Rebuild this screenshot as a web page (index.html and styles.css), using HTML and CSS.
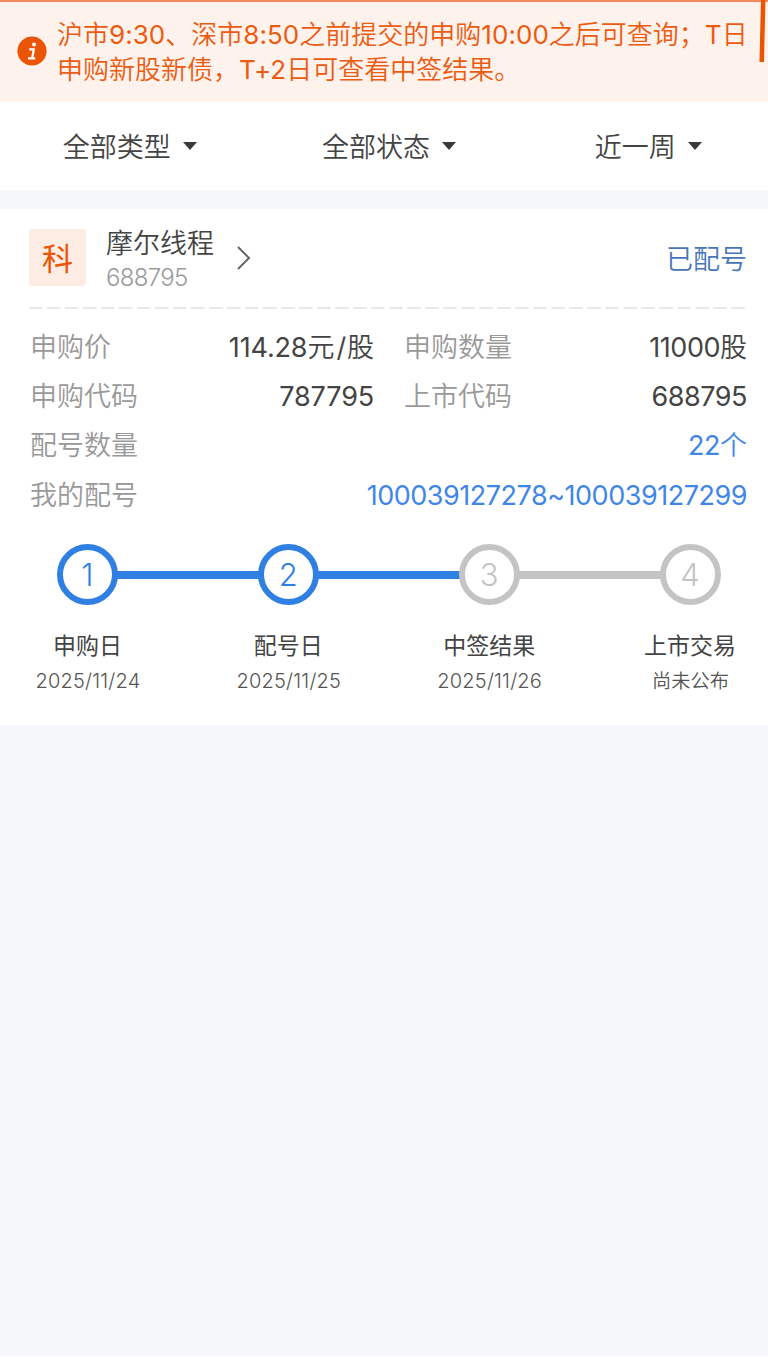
FILE: index.html
```html
<!DOCTYPE html>
<html lang="zh-CN">
<head>
    <meta charset="UTF-8">
    <meta name="viewport" content="width=device-width, initial-scale=1.0">
    <title>新股申购查询</title>
    <link rel="stylesheet" href="styles.css">
</head>
<body>
    <div class="notice">
        <svg class="notice-icon" viewBox="0 0 30 30">
            <circle cx="15" cy="15" r="14.6" fill="#ea5404"/>
            <circle cx="17" cy="8.6" r="2" fill="#fff"/>
            <path d="M12.2 13.4h4.6l-1.6 9M11 22.4h7.2" fill="none" stroke="#fff" stroke-width="2.3"/>
        </svg>
        <div class="notice-text">
            <div class="notice-line">沪市<span class="num">9:30</span>、深市<span class="num">8:50</span>之前提交的申购<span class="num">10:00</span>之后可查询；<span class="num">T</span>日</div>
            <div class="notice-line">申购新股新债，<span class="num">T+2</span>日可查看中签结果。</div>
        </div>
        <svg class="notice-mark" viewBox="0 0 8 64">
            <path d="M5.2 0L3.7 62" stroke="#ea5404" stroke-width="4.5"/>
        </svg>
    </div>

    <div class="filters">
        <div class="filter">全部类型<i class="caret"></i></div>
        <div class="filter">全部状态<i class="caret"></i></div>
        <div class="filter">近一周<i class="caret"></i></div>
    </div>

    <div class="card">
        <div class="stock">
            <div class="tag">科</div>
            <div class="stock-info">
                <div class="stock-name">摩尔线程</div>
                <div class="stock-code">688795</div>
            </div>
            <svg class="arrow" viewBox="0 0 14 24">
                <path d="M1 1l11 11L1 23" fill="none" stroke="#666" stroke-width="2"/>
            </svg>
            <div class="state">已配号</div>
        </div>

        <svg class="divider" viewBox="0 0 716 2">
            <path d="M0 1h716" stroke="#e9e9e9" stroke-width="2" stroke-dasharray="13.5 4.51"/>
        </svg>

        <div class="info">
            <div class="row">
                <span class="label">申购价</span>
                <span class="value mid"><span class="num">114.28</span>元<span class="num slash">/</span>股</span>
                <span class="label">申购数量</span>
                <span class="value"><span class="num">11000</span>股</span>
            </div>
            <div class="row">
                <span class="label">申购代码</span>
                <span class="value mid"><span class="num">787795</span></span>
                <span class="label">上市代码</span>
                <span class="value"><span class="num">688795</span></span>
            </div>
            <div class="row">
                <span class="label">配号数量</span>
                <span class="value blue"><span class="num">22</span>个</span>
            </div>
            <div class="row">
                <span class="label">我的配号</span>
                <span class="value blue"><span class="num">100039127278~100039127299</span></span>
            </div>
        </div>

        <div class="steps">
            <div class="step done">
                <div class="circle">1</div>
                <div class="step-name">申购日</div>
                <div class="step-date">2025/11/24</div>
            </div>
            <div class="step done">
                <div class="circle">2</div>
                <div class="step-name">配号日</div>
                <div class="step-date">2025/11/25</div>
            </div>
            <div class="step">
                <div class="circle">3</div>
                <div class="step-name">中签结果</div>
                <div class="step-date">2025/11/26</div>
            </div>
            <div class="step">
                <div class="circle">4</div>
                <div class="step-name">上市交易</div>
                <div class="step-date cjk">尚未公布</div>
            </div>
        </div>
    </div>
</body>
</html>
```
FILE: styles.css
```css
* {
    box-sizing: border-box;
}
html {
    background: #fff;
}
body {
    margin: 0;
    height: 1356px;
    background: #f6f7fa;
    color: #444;
    font-family: "Noto Sans CJK SC", sans-serif;
    font-size: 27px;
    font-weight: 350;
    overflow-x: hidden;
}
.num {
    font-family: Inter, sans-serif;
    font-weight: 400;
    line-height: 0;
}
.notice {
    position: relative;
    display: flex;
    height: 102px;
    padding: 13px 0 0 17px;
    background: #fef2ed;
    border-top: 2px solid #f08a5c;
    color: #ec5b10;
}
.notice-icon {
    width: 30px;
    height: 30px;
    margin-top: 21px;
}
.notice-text {
    margin-left: 10px;
    font-size: 26px;
    line-height: 35px;
    white-space: nowrap;
}
.notice-line .num {
    letter-spacing: 0.05px;
}
.notice-mark {
    position: absolute;
    top: -2px;
    right: 2px;
    width: 8px;
    height: 64px;
}
.filters {
    display: flex;
    height: 88px;
    margin-right: -10px;
    padding-bottom: 2px;
    background: #fff;
}
.filter {
    flex: 1;
    display: flex;
    align-items: center;
    justify-content: center;
}
.caret {
    margin: 2px 0 0 12px;
    border: 7px solid transparent;
    border-top: 8px solid #3a3a3a;
    border-bottom: 0;
}
.card {
    height: 516px;
    margin-top: 19px;
    padding: 14px 21px 0 29px;
    background: #fff;
}
.stock {
    display: flex;
    align-items: center;
    height: 68px;
}
.tag {
    width: 57px;
    height: 57px;
    border-radius: 4px;
    background: #fdece4;
    color: #ea5404;
    font-size: 31px;
    font-weight: 400;
    line-height: 55px;
    text-align: center;
}
.stock-info {
    width: 110px;
    margin-left: 20px;
    padding-top: 3px;
}
.stock-name {
    line-height: 38px;
    white-space: nowrap;
}
.stock-code {
    font-family: Inter, sans-serif;
    font-size: 24px;
    letter-spacing: -0.7px;
    line-height: 34px;
    color: #999;
}
.arrow {
    width: 14px;
    height: 24px;
    margin: 2px 0 0 21px;
}
.state {
    margin-left: auto;
    color: #4876b8;
}
.divider {
    display: block;
    width: 716px;
    height: 2px;
    margin-top: 16px;
}
.info {
    padding-top: 12px;
}
.row {
    display: flex;
    height: 49.2px;
    padding-left: 1px;
    line-height: 49px;
}
.label {
    width: 108px;
    color: #999;
    white-space: nowrap;
}
.value {
    flex: 1;
    text-align: right;
}
.value .num {
    letter-spacing: -0.48px;
}
.value .slash {
    padding: 0 1px 0 2px;
}
.value.mid {
    flex: none;
    width: 236px;
    margin-right: 30px;
}
.value.mid .num {
    letter-spacing: -0.15px;
}
.blue {
    color: #3f86e8;
}
.steps {
    display: flex;
    margin: 26px -43.5px 0 -42px;
}
.step {
    position: relative;
    flex: 1;
    display: flex;
    flex-direction: column;
    align-items: center;
}
.circle {
    width: 61px;
    height: 61px;
    border: 6px solid #c4c4c4;
    border-radius: 50%;
    color: #c4c4c4;
    font-family: Inter, sans-serif;
    font-size: 31px;
    font-weight: 300;
    line-height: 49px;
    text-align: center;
}
.done .circle {
    border-color: #3080e4;
    color: #3080e4;
}
/* connector to the next step */
.step:not(:last-child)::after {
    content: "";
    position: absolute;
    top: 27px;
    left: calc(50% + 29px);
    width: calc(100% - 58px);
    height: 8px;
    background: #c4c4c4;
}
.step.done::after {
    background: #3080e4;
}
.step-name {
    margin-top: 22px;
    font-size: 23px;
    font-weight: 400;
    line-height: 34px;
}
.step-date {
    margin-left: 1px;
    padding-top: 2px;
    font-family: Inter, sans-serif;
    font-size: 20px;
    letter-spacing: 0.2px;
    line-height: 37px;
    color: #555;
}
.step-date.cjk {
    padding-top: 1px;
    font-family: "Noto Sans CJK SC", sans-serif;
    font-size: 19.3px;
    letter-spacing: 0;
}
```
